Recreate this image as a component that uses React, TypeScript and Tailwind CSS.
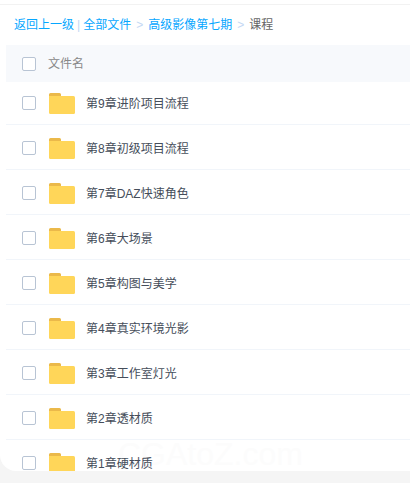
import React from 'react';

const folders = [
  '第9章进阶项目流程',
  '第8章初级项目流程',
  '第7章DAZ快速角色',
  '第6章大场景',
  '第5章构图与美学',
  '第4章真实环境光影',
  '第3章工作室灯光',
  '第2章透材质',
  '第1章硬材质',
];

const Checkbox = () => (
  <span className="block h-[14px] w-[14px] shrink-0 rounded-[2px] border border-[#b8c4d4] bg-white" />
);

const FolderIcon = () => (
  <svg width="26" height="21" viewBox="0 0 26 21" className="block shrink-0">
    <path d="M0 1.5A1.5 1.5 0 0 1 1.5 0h9A1.5 1.5 0 0 1 12 1.5V6H0Z" fill="#ebb94a" />
    <path d="M0 3h24.5A1.5 1.5 0 0 1 26 4.5v15a1.5 1.5 0 0 1-1.5 1.5h-23A1.5 1.5 0 0 1 0 19.5Z" fill="#ffd659" />
  </svg>
);

const App: React.FC = () => {
  return (
    <div className="relative h-[483px] w-[410px] overflow-hidden bg-[#f5f5f5] font-['Liberation_Sans','Noto_Sans_CJK_SC',sans-serif]">
      <div className="relative h-[471px] overflow-hidden rounded-bl-[16px] bg-white">
        {/* Faint watermark, sits behind the list */}
        <span className="absolute left-[118px] top-[438px] text-[32px] leading-none text-[#fcfcfc]">CGAtoZ.com</span>

        <div className="h-[5px] border-b border-[#f2f2f2]" />

        {/* Breadcrumb */}
        <div className="flex h-[40px] items-center pl-[14px] text-[12px] text-[#06a7ff]">
          <span>返回上一级</span>
          <span className="mx-[3px] text-[#c4d8f4]">|</span>
          <span>全部文件</span>
          <span className="mx-[5px] text-[#c4d8f4]">&gt;</span>
          <span>高级影像第七期</span>
          <span className="mx-[5px] text-[#c4d8f4]">&gt;</span>
          <span className="text-[#666]">课程</span>
        </div>

        {/* Table header */}
        <div className="ml-[6px] flex h-[37px] items-center bg-[#f7f9fc] pl-[16px] text-[12px] text-[#888]">
          <Checkbox />
          <span className="ml-[12px]">文件名</span>
        </div>

        {/* Rows */}
        <div className="relative -mt-[2px]">
          {folders.map((name) => (
            <div key={name} className="ml-[6px] flex h-[45px] items-center border-b border-[#f1f5fa] pl-[16px] pt-[3px]">
              <span className="-mt-[1px]">
                <Checkbox />
              </span>
              <span className="ml-[13px]">
                <FolderIcon />
              </span>
              <span className="ml-[11px] text-[12px] text-[#454d5a]">{name}</span>
            </div>
          ))}
        </div>
      </div>
    </div>
  );
};

export default App;
